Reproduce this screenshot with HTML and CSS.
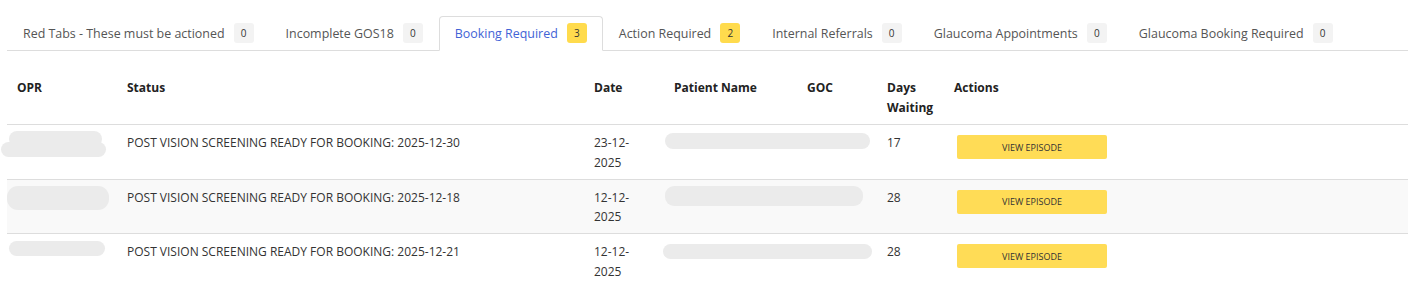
FILE: index.html
```html
<!DOCTYPE html>
<html lang="en">
<head>
    <meta charset="UTF-8">
    <title>Episodes - Booking Required</title>
    <link rel="stylesheet" href="styles.css">
</head>
<body>

<div class="page">
    <!-- Tabs -->
    <ul class="tabs">
        <li class="tab">Red Tabs - These must be actioned <span class="badge">0</span></li>
        <li class="tab">Incomplete GOS18 <span class="badge">0</span></li>
        <li class="tab active">Booking Required <span class="badge warn">3</span></li>
        <li class="tab">Action Required <span class="badge warn">2</span></li>
        <li class="tab">Internal Referrals <span class="badge">0</span></li>
        <li class="tab">Glaucoma Appointments <span class="badge">0</span></li>
        <li class="tab">Glaucoma Booking Required <span class="badge">0</span></li>
    </ul>

    <!-- Episodes table -->
    <table class="episodes">
        <colgroup>
            <col class="c-opr">
            <col class="c-status">
            <col class="c-date">
            <col class="c-name">
            <col class="c-goc">
            <col class="c-days">
            <col>
        </colgroup>
        <thead>
            <tr>
                <th>OPR</th>
                <th>Status</th>
                <th>Date</th>
                <th>Patient Name</th>
                <th>GOC</th>
                <th>Days Waiting</th>
                <th>Actions</th>
            </tr>
        </thead>
        <tbody>
            <tr>
                <td>
                    <div class="blur opr-1a"></div>
                    <div class="blur opr-1b"></div>
                </td>
                <td>POST VISION SCREENING READY FOR BOOKING: 2025-12-30</td>
                <td>23-12-2025</td>
                <td><div class="blur name-1"></div></td>
                <td></td>
                <td>17</td>
                <td><button class="view-button">View Episode</button></td>
            </tr>
            <tr>
                <td><div class="blur opr-2"></div></td>
                <td>POST VISION SCREENING READY FOR BOOKING: 2025-12-18</td>
                <td>12-12-2025</td>
                <td><div class="blur name-2"></div></td>
                <td></td>
                <td>28</td>
                <td><button class="view-button">View Episode</button></td>
            </tr>
            <tr>
                <td><div class="blur opr-3"></div></td>
                <td>POST VISION SCREENING READY FOR BOOKING: 2025-12-21</td>
                <td>12-12-2025</td>
                <td><div class="blur name-3"></div></td>
                <td></td>
                <td>28</td>
                <td><button class="view-button">View Episode</button></td>
            </tr>
        </tbody>
    </table>
</div>

</body>
</html>
```

FILE: styles.css
```css
body {
    margin: 0;
    padding: 0;
    font-family: 'Open Sans', sans-serif;
    font-size: 12px;
    color: #333;
    background-color: #fff;
}

.page {
    padding: 16px 0 0 7px;
}

/* Tabs */
.tabs {
    display: flex;
    list-style: none;
    margin: 0;
    padding: 0;
    border-bottom: 1px solid #ddd;
}

.tab {
    display: flex;
    align-items: center;
    height: 35px;
    padding: 0 15px 1px;
    margin-bottom: -1px;
    color: #555;
    font-size: 12.45px;
    border: 1px solid transparent;
    border-radius: 4px 4px 0 0;
    box-sizing: border-box;
}

.tab.active {
    color: #4263d6;
    background-color: #fff;
    border-color: #ddd #ddd #fff;
}

.badge {
    display: inline-flex;
    align-items: center;
    justify-content: center;
    min-width: 20px;
    height: 20px;
    margin-left: 9px;
    border-radius: 3px;
    background-color: #f3f3f3;
    color: #333;
    font-size: 10px;
}

.badge.warn {
    background-color: #ffdb4d;
}

/* Table */
.episodes {
    width: 100%;
    margin-top: 20px;
    border-collapse: collapse;
    table-layout: fixed;
    font-size: 12px;
}

.c-opr { width: 110px; }
.c-status { width: 467px; }
.c-date { width: 80px; }
.c-name { width: 133px; }
.c-goc { width: 80px; }
.c-days { width: 67px; }

.episodes th,
.episodes td {
    padding: 7px 10px;
    line-height: 19.5px;
    text-align: left;
    vertical-align: top;
}

.episodes th {
    font-weight: bold;
    color: #222;
    border-bottom: 1px solid #ddd;
}

.episodes td {
    padding-top: 8px;
    padding-bottom: 6.5px;
    border-bottom: 1px solid #ddd;
}

.episodes tbody tr:nth-child(even) {
    background-color: #f9f9f9;
}

.episodes tbody tr:last-child td {
    border-bottom: none;
}

/* Redacted names */
.blur {
    background-color: #ebebeb;
    border-radius: 9px;
}

.opr-1a { width: 93px; height: 16px; margin: -2px 0 0 -8px; }
.opr-1b { width: 105px; height: 15px; margin: -5px 0 0 -16px; }
.opr-2 { width: 102px; height: 24px; margin: -2px 0 0 -10px; border-radius: 11px; }
.opr-3 { width: 96px; height: 15px; margin: -1px 0 0 -8px; }

.name-1 { width: 205px; height: 16px; margin: 0 0 0 -9px; }
.name-2 { width: 198px; height: 20px; margin: -2px 0 0 -9px; }
.name-3 { width: 209px; height: 15px; margin: 2px 0 0 -11px; }

.view-button {
    display: block;
    width: 150px;
    height: 24px;
    margin: 2px 0 0 3px;
    border: none;
    border-radius: 2px;
    background-color: #ffdc56;
    color: #333;
    font-family: inherit;
    font-size: 9px;
    text-transform: uppercase;
    cursor: pointer;
}
```
